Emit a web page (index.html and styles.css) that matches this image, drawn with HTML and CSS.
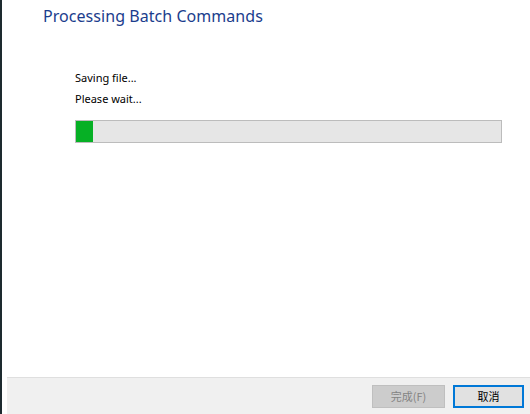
FILE: index.html
```html
<!DOCTYPE html>
<html>
<head>
<meta charset="utf-8">
<link rel="stylesheet" href="styles.css">
</head>
<body>
<div class="window">
  <div class="edge"></div>
  <div class="dialog">
    <div class="content">
      <h1 class="title">Processing Batch Commands</h1>
      <div class="status">
        <p class="line">Saving file...</p>
        <p class="line">Please wait...</p>
        <div class="progress"><div class="fill" style="width:17px"></div></div>
      </div>
    </div>
    <div class="footer">
      <button class="btn disabled">完成(F)</button>
      <button class="btn primary">取消</button>
    </div>
  </div>
</div>
</body>
</html>
```
FILE: styles.css
```css
html, body {
  margin: 0;
  padding: 0;
  background: #ffffff;
}
.window {
  display: flex;
  width: 530px;
  height: 414px;
  overflow: hidden;
  font-family: "Noto Sans", "Noto Sans CJK SC", sans-serif;
}
.edge {
  width: 2px;
  background: #1d2a2f;
  flex: none;
}
.dialog {
  flex: 1;
  display: flex;
  flex-direction: column;
  padding-left: 5px;
}
.content {
  flex: 1;
  padding-left: 36px;
}
.title {
  margin: 4px 0 0 0;
  font-weight: normal;
  font-size: 16px;
  line-height: 24px;
  color: #1b3d8d;
  letter-spacing: 0.05px;
}
.status {
  padding: 42px 0 0 32px;
}
.line {
  margin: 0;
  font-size: 11px;
  line-height: 15px;
  color: #000;
  margin-bottom: 6px;
}
.progress {
  margin-top: 14px;
  width: 425px;
  height: 21px;
  border: 1px solid #bcbcbc;
  background: #e6e6e6;
}
.fill {
  height: 100%;
  background: #06b025;
}
.footer {
  height: 36px;
  border-top: 1px solid #dfdfdf;
  background: #f0f0f0;
  display: flex;
  justify-content: flex-end;
  align-items: center;
  gap: 8px;
  padding-right: 6px;
}
.btn {
  box-sizing: border-box;
  width: 73px;
  height: 23px;
  font-family: "Noto Sans CJK SC", sans-serif;
  font-size: 11px;
  padding: 0;
  margin: 0;
  border-radius: 0;
}
.btn.disabled {
  background: #cccccc;
  border: 1px solid #bfbfbf;
  color: #838383;
}
.btn.primary {
  background: #e1e1e1;
  border: 2px solid #0078d7;
  color: #000;
  width: 71px;
}
```
